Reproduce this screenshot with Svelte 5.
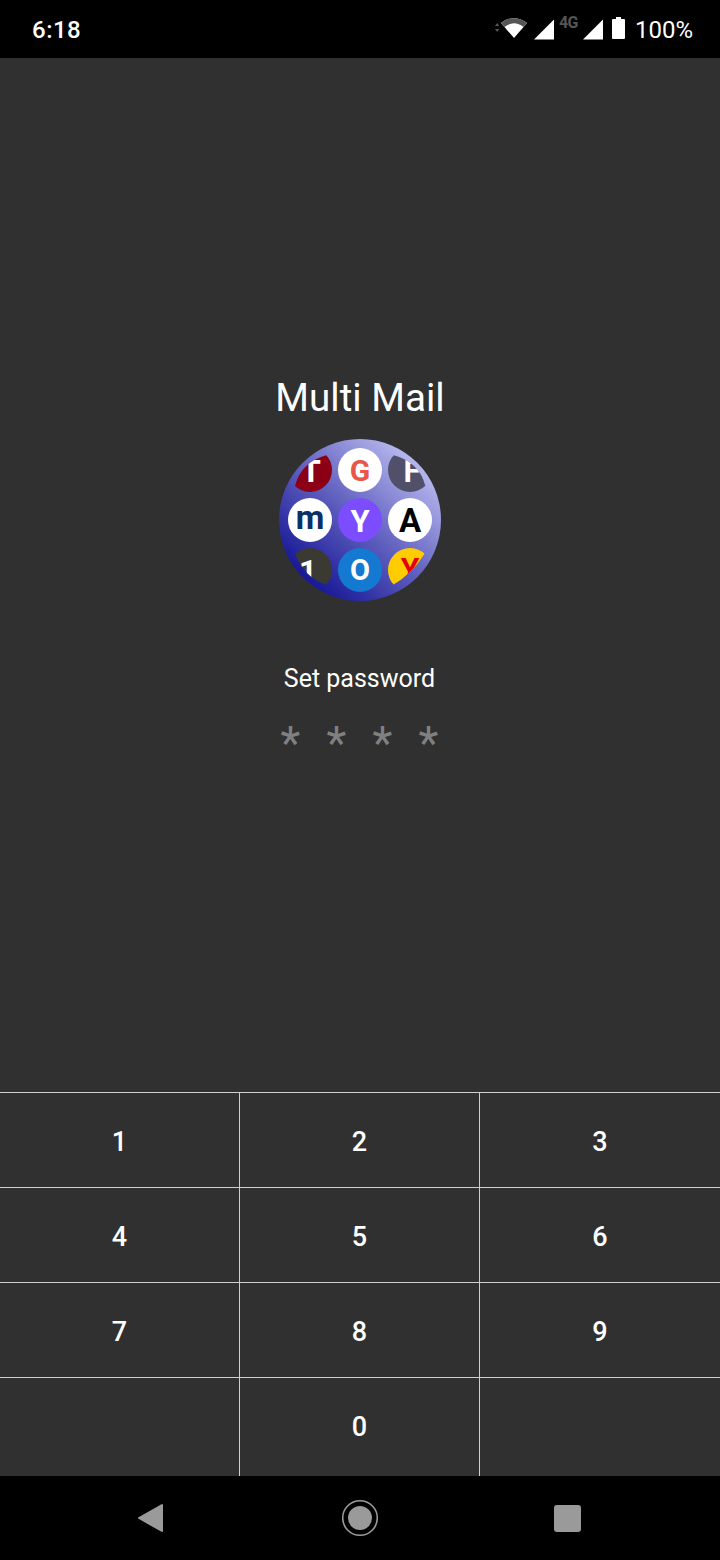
<script>
  const rows = [['1', '2', '3'], ['4', '5', '6'], ['7', '8', '9'], ['', '0', '']];
  const dots = ['*', '*', '*', '*'];
</script>

<div class="screen">
  <header class="status">
    <span class="time">6:18</span>
    <div class="status-right">
      <svg class="wifi" width="36" height="24" viewBox="0 0 36 24">
        <path d="M2 10l2.2-3 2.2 3zM2 13l2.2 3 2.2-3z" fill="#555" />
        <path d="M8 7C16 .5 26 .5 34 7L21 22z" fill="#fff" />
        <path d="M8 7C16 .5 26 .5 34 7L30.5 11C24 6 18 6 11.5 11z" fill="#555" />
      </svg>
      <svg class="signal" width="20" height="21" viewBox="0 0 20 21"><path d="M0 20.5L20 .5v20z" fill="#fff" /></svg>
      <span class="net">4G</span>
      <svg class="signal" width="20" height="21" viewBox="0 0 20 21"><path d="M0 20.5L20 .5v20z" fill="#fff" /></svg>
      <svg class="battery" width="13" height="22" viewBox="0 0 13 22">
        <path d="M4 0h5v2h3a1 1 0 0 1 1 1v18a1 1 0 0 1-1 1H1a1 1 0 0 1-1-1V3a1 1 0 0 1 1-1h3z" fill="#fff" />
      </svg>
      <span class="pct">100%</span>
    </div>
  </header>

  <main class="content">
    <h1>Multi Mail</h1>
    <svg class="logo" width="180" height="180" viewBox="0 0 180 180">
      <defs>
        <linearGradient id="disc" x1="0.18" y1="0.86" x2="0.84" y2="0.14">
          <stop offset="0" stop-color="#1a1a98" />
          <stop offset="0.5" stop-color="#6262c0" />
          <stop offset="1" stop-color="#b6b6ee" />
        </linearGradient>
        <clipPath id="tl"><path d="M25 56Q31 32 57 25L70 10V70H10z" /></clipPath>
        <clipPath id="tr"><path d="M123 25Q149 32 155 55L170 70H110V10z" /></clipPath>
        <clipPath id="bl"><path d="M25 123Q33 147 57 155L70 170V110H10z" /></clipPath>
        <clipPath id="br"><path d="M123 155Q143 143 155 123L170 110H110V170z" /></clipPath>
      </defs>
      <circle cx="90" cy="90" r="81" fill="url(#disc)" />

      <g clip-path="url(#tl)">
        <circle cx="40" cy="40" r="22" fill="#8b0014" />
        <text x="41" y="52" class="mark" font-size="32" fill="#fff">T</text>
      </g>
      <circle cx="90" cy="40" r="22" fill="#fff" />
      <text x="90" y="51" class="mark" font-size="30" fill="#e8554a">G</text>
      <g clip-path="url(#tr)">
        <circle cx="140" cy="40" r="22" fill="#50506a" />
        <text x="142" y="52" class="mark" font-size="31" fill="#fff">F</text>
      </g>

      <circle cx="40" cy="90" r="22" fill="#fff" />
      <text x="40" y="99" class="mark" font-size="33" fill="#0c2f66">m</text>
      <circle cx="90" cy="90" r="22" fill="#7c4dff" />
      <text x="90" y="102" class="mark" font-size="31" fill="#fff">Y</text>
      <circle cx="140" cy="90" r="22" fill="#fff" />
      <text x="140" y="102" class="mark" font-size="33" fill="#000">A</text>

      <g clip-path="url(#bl)">
        <circle cx="40" cy="140" r="22" fill="#3a3a32" />
        <text x="38" y="152" class="mark" font-size="31" fill="#fff">1</text>
      </g>
      <circle cx="90" cy="140" r="22" fill="#1479d0" />
      <text x="90" y="150" class="mark" font-size="29" fill="#fff">O</text>
      <g clip-path="url(#br)">
        <circle cx="140" cy="140" r="22" fill="#ffcc00" />
        <text x="140" y="149" class="mark" font-size="30" fill="#e3000f">Y</text>
      </g>
    </svg>
    <p class="label">Set password</p>
    <div class="dots">
      {#each dots as d}
        <span>{d}</span>
      {/each}
    </div>
  </main>

  <section class="keypad">
    {#each rows as row, r}
      <div class="row" class:last={r === 3}>
        {#each row as key}
          <div class="key">{key}</div>
        {/each}
      </div>
    {/each}
  </section>

  <nav class="navbar">
    <svg width="26" height="30" viewBox="0 0 26 30">
      <path d="M25 2v26L2 15z" fill="#9a9a9a" stroke="#9a9a9a" stroke-width="2" stroke-linejoin="round" />
    </svg>
    <svg width="38" height="38" viewBox="0 0 38 38">
      <circle cx="19" cy="19" r="17.3" fill="none" stroke="#9a9a9a" stroke-width="1.6" />
      <circle cx="19" cy="19" r="12" fill="#9a9a9a" />
    </svg>
    <div class="square"></div>
  </nav>
</div>

<style>
  :global(body) {
    margin: 0;
    background: #303030;
  }

  .screen {
    width: 720px;
    height: 1560px;
    display: flex;
    flex-direction: column;
    font-family: Roboto, sans-serif;
    color: #fff;
    background: #303030;
    overflow: hidden;
  }

  .status {
    height: 58px;
    flex: none;
    background: #000;
    display: flex;
    align-items: center;
    justify-content: space-between;
    padding: 0 27px 0 32px;
    box-sizing: border-box;
  }

  .time {
    font-size: 24px;
    font-weight: 500;
    letter-spacing: 0.5px;
    margin-top: 2px;
  }

  .status-right {
    display: flex;
    align-items: center;
    height: 58px;
  }

  .wifi {
    margin: 0 5px 3px 0;
  }

  .net {
    font-size: 16px;
    font-weight: 700;
    letter-spacing: -0.6px;
    color: #555;
    width: 29px;
    text-align: center;
    margin-top: -13px;
  }

  .battery {
    margin: 0 0 2px 9px;
  }

  .pct {
    font-size: 24px;
    margin: 2px 0 0 10px;
    font-weight: 400;
  }

  .content {
    flex: 1;
    display: flex;
    flex-direction: column;
    align-items: center;
    padding-top: 318px;
  }

  h1 {
    margin: 0;
    font-size: 38.6px;
    font-weight: 400;
    line-height: 44px;
  }

  .logo {
    display: block;
    margin-top: 10px;
  }

  .mark {
    font-family: Roboto, sans-serif;
    font-weight: 700;
    text-anchor: middle;
  }

  .label {
    margin: 54px 1px 0 0;
    font-size: 25px;
    line-height: 30px;
  }

  .dots {
    display: flex;
    gap: 22px;
    margin: 24px 1px 0 0;
    font-size: 46px;
    line-height: 50px;
    color: #808080;
  }

  .dots span {
    width: 24px;
    text-align: center;
  }

  .keypad {
    flex: none;
  }

  .row {
    display: grid;
    grid-template-columns: 240px 240px 240px;
    height: 95px;
    box-sizing: border-box;
    border-top: 1px solid #cfcfcf;
  }

  .row.last {
    height: 99px;
  }

  .key {
    display: flex;
    align-items: center;
    justify-content: center;
    font-size: 27px;
    font-weight: 500;
    border-right: 1px solid #cfcfcf;
    padding-top: 3px;
    box-sizing: border-box;
  }

  .row.last .key {
    padding-top: 0;
  }

  .key:last-child {
    border-right: none;
  }

  .navbar {
    height: 84px;
    flex: none;
    background: #000;
    display: grid;
    grid-template-columns: 300px 120px 300px;
    align-items: center;
    justify-items: center;
  }

  .navbar svg:first-child {
    justify-self: start;
    margin-left: 137px;
  }

  .square {
    width: 27px;
    height: 27px;
    border-radius: 3px;
    background: #9a9a9a;
    justify-self: end;
    margin-right: 139px;
  }
</style>
